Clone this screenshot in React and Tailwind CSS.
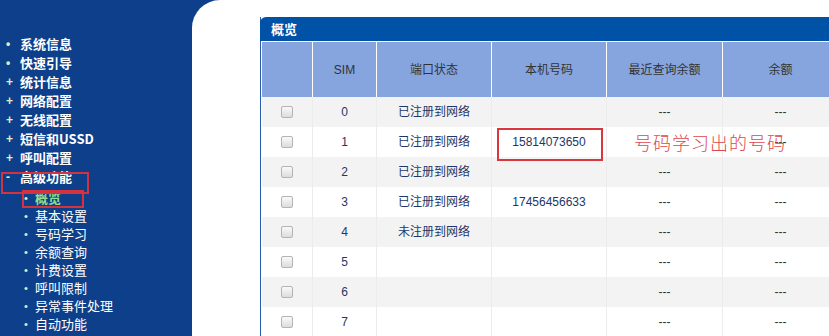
import React from 'react';

const menu = [
    { mark: '•', label: '系统信息' },
    { mark: '•', label: '快速引导' },
    { mark: '+', label: '统计信息' },
    { mark: '+', label: '网络配置' },
    { mark: '+', label: '无线配置' },
    { mark: '+', label: '短信和USSD' },
    { mark: '+', label: '呼叫配置' },
    { mark: '-', label: '高级功能' },
];

const subMenu = ['概览', '基本设置', '号码学习', '余额查询', '计费设置', '呼叫限制', '异常事件处理', '自动功能'];

// row 1 "最近查询余额" sits under the red note, so it is left empty
const rows = [
    { sim: 0, status: '已注册到网络', num: '', last: '---', bal: '---' },
    { sim: 1, status: '已注册到网络', num: '15814073650', last: '', bal: '---' },
    { sim: 2, status: '已注册到网络', num: '', last: '---', bal: '---' },
    { sim: 3, status: '已注册到网络', num: '17456456633', last: '---', bal: '---' },
    { sim: 4, status: '未注册到网络', num: '', last: '---', bal: '---' },
    { sim: 5, status: '', num: '', last: '---', bal: '---' },
    { sim: 6, status: '', num: '', last: '---', bal: '---' },
    { sim: 7, status: '', num: '', last: '---', bal: '---' },
];

const cols = ['w-[51px]', 'w-[64px]', 'w-[115px]', 'w-[115px]', 'w-[116px]', 'w-[116px]'];
const heads = ['', 'SIM', '端口状态', '本机号码', '最近查询余额', '余额'];

const Checkbox = () => (
    <span className="inline-block w-[12px] h-[12px] rounded-[2px] border border-[#b4b4b4] bg-gradient-to-b from-[#fafafa] to-[#dcdcdc]" />
);

const App = () => {
    return (
        <div
            className="relative w-[829px] h-[336px] overflow-hidden flex bg-[#0d3f8b]"
            style={{ fontFamily: '"Liberation Sans", "Noto Sans CJK SC", sans-serif' }}
        >
            {/* Sidebar */}
            <aside className="w-[192px] shrink-0 pt-[34px]">
                <ul>
                    {menu.map((m, i) => (
                        <li key={i} className="flex items-center h-[19px] text-[13px] font-bold text-white">
                            <span className="w-[20px] pl-[6px] text-[#e2ecc4] text-[12px] leading-none">{m.mark}</span>
                            <span style={{ fontFamily: '"Noto Sans CJK SC", sans-serif' }}>{m.label}</span>
                        </li>
                    ))}
                </ul>
                <ul className="mt-[3px]">
                    {subMenu.map((s, i) => (
                        <li key={i} className="flex items-center h-[18px] text-[13px] text-white">
                            <span className="w-[35px] pl-[24px] text-[#e2ecc4] text-[11px] leading-none">•</span>
                            <span
                                className={i === 0 ? 'font-bold text-[#8fe08a]' : ''}
                                style={{ fontFamily: '"Noto Sans CJK SC", sans-serif' }}
                            >
                                {s}
                            </span>
                        </li>
                    ))}
                </ul>
            </aside>

            {/* Content */}
            <main className="flex-1 bg-white rounded-tl-[28px] pl-[68px] pt-[17px]">
                <div className="w-[600px] border-l border-[#2a5eae]">
                    <div className="h-[24px] bg-[#0052a7] rounded-tl-[6px] -ml-px pl-[11px] flex items-center text-white text-[13px] font-bold">
                        <span style={{ fontFamily: '"Noto Sans CJK SC", sans-serif' }}>概览</span>
                    </div>
                    <div className="pl-px">
                        <div className="flex h-[56px] border-t border-white">
                            {heads.map((h, i) => (
                                <div
                                    key={i}
                                    className={`${cols[i]} shrink-0 bg-[#86a5df] border-r border-white flex items-center justify-center text-[12px] text-[#333]`}
                                >
                                    {h}
                                </div>
                            ))}
                        </div>
                        {rows.map((r, ri) => (
                            <div key={ri} className={`flex h-[30px] ${ri % 2 === 0 ? 'bg-[#f3f3f3]' : 'bg-white'}`}>
                                {[null, r.sim, r.status, r.num, r.last, r.bal].map((v, ci) => (
                                    <div
                                        key={ci}
                                        className={`${cols[ci]} shrink-0 border-r border-[#ececec] flex items-center justify-center text-[12px] ${ci >= 4 ? 'text-[#333]' : 'text-[#1d3768]'}`}
                                    >
                                        {ci === 0 ? <Checkbox /> : v}
                                    </div>
                                ))}
                            </div>
                        ))}
                    </div>
                </div>
            </main>

            {/* Annotations */}
            <div className="absolute left-[1px] top-[172px] w-[88px] h-[22px] border-2 border-[#d3323e]" />
            <div className="absolute left-[22px] top-[190px] w-[62px] h-[18px] border-2 border-[#d3323e]" />
            <div className="absolute left-[497px] top-[128px] w-[106px] h-[33px] border-2 border-[#d9363e]" />
            <div
                className="absolute left-[634px] top-[131px] text-[18px] leading-[22px] text-[#e0474c] tracking-[1px]"
                style={{ fontFamily: '"Noto Sans CJK SC", sans-serif', fontWeight: 300 }}
            >
                号码学习出的号码
            </div>
        </div>
    );
};

export default App;
